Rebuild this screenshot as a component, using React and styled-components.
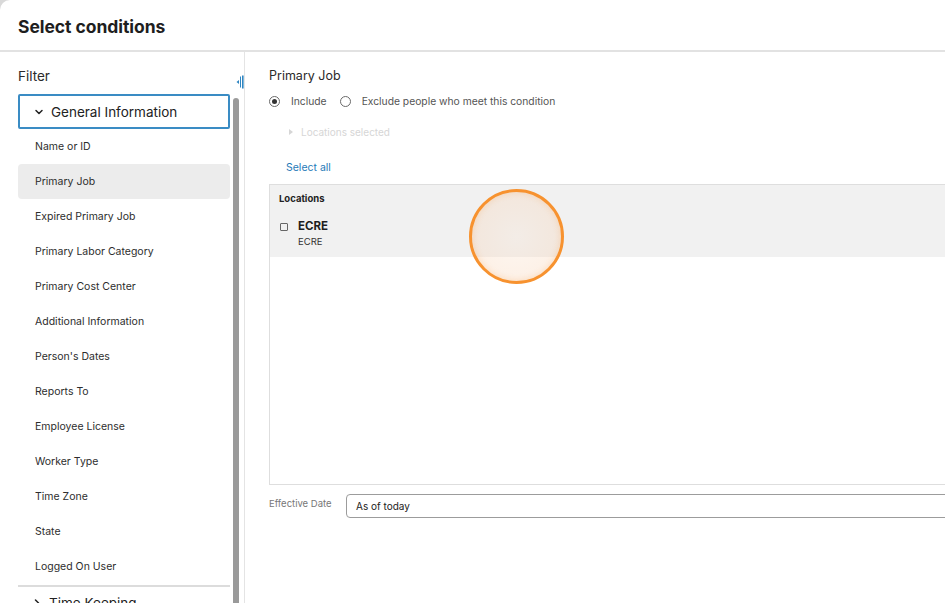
import React from "react";
import styled, { createGlobalStyle } from "styled-components";

const Global = createGlobalStyle`
  html, body { margin: 0; padding: 0; background: #d9d9d9; }
  body { font-family: Inter, "Open Sans", sans-serif; color: #222; }
  * { box-sizing: border-box; }
`;

const Dialog = styled.div`
  width: 945px;
  height: 603px;
  background: #fff;
  border-top-left-radius: 10px;
  display: flex;
  flex-direction: column;
  overflow: hidden;
  position: relative;
`;

const Header = styled.div`
  height: 52px;
  flex: none;
  display: flex;
  align-items: center;
  padding: 2px 0 0 18px;
  border-bottom: 2px solid #e2e2e2;
`;

const Title = styled.h1`
  margin: 0;
  font-size: 17.5px;
  font-weight: 700;
  letter-spacing: -0.05px;
  color: #1e1e1e;
`;

const Body = styled.div`
  flex: 1;
  display: flex;
  min-height: 0;
`;

const LeftPanel = styled.div`
  width: 245px;
  flex: none;
  display: flex;
  border-right: 1px solid #e4e4e4;
  padding-left: 18px;
`;

const LeftContent = styled.div`
  width: 213px;
  display: flex;
  flex-direction: column;
  padding-top: 14px;
`;

const FilterLabel = styled.div`
  font-size: 13.5px;
  line-height: 20px;
  color: #2a2a2a;
  margin-bottom: 8px;
  flex: none;
`;

const GroupBox = styled.div`
  height: 35px;
  flex: none;
  border: 2px solid #3a8cc4;
  border-radius: 2px;
  display: flex;
  align-items: center;
  gap: 7px;
  padding-left: 14px;
  font-size: 13.5px;
  color: #222;
`;

const Item = styled.div`
  height: 35px;
  flex: none;
  display: flex;
  align-items: center;
  padding-left: 17px;
  font-size: 10.5px;
  color: #2d2d2d;
  border-radius: 4px;
  background: ${(p) => (p.$active ? "#ececec" : "transparent")};
`;

const Separator = styled.div`
  height: 2px;
  flex: none;
  background: #dcdcdc;
  margin-top: 1px;
`;

const GroupHeader = styled.div`
  display: flex;
  flex: none;
  align-items: center;
  gap: 7px;
  padding: 8px 0 0 14px;
  font-size: 13.5px;
  color: #222;
`;

const ScrollColumn = styled.div`
  width: 14px;
  display: flex;
  flex-direction: column;
  align-items: flex-start;
  padding-top: 23px;
`;

const CollapseIcon = styled.svg`
  margin-left: 6px;
  flex: none;
`;

const ScrollThumb = styled.div`
  margin-left: 3px;
  margin-top: 9px;
  width: 6px;
  flex: 1;
  background: #9a9a9a;
  border-radius: 3px 3px 0 0;
`;

const RightPanel = styled.div`
  flex: 1;
  min-width: 0;
  padding: 15px 0 0 24px;
  display: flex;
  flex-direction: column;
`;

const SectionTitle = styled.div`
  font-size: 12.5px;
  line-height: 18px;
  color: #2a2a2a;
`;

const RadioRow = styled.div`
  display: flex;
  align-items: center;
  height: 16px;
  margin-top: 8px;
  font-size: 10.3px;
  color: #555;
`;

const Radio = styled.span`
  width: 11px;
  height: 11px;
  border-radius: 50%;
  border: 1px solid #6a6a6a;
  display: inline-flex;
  align-items: center;
  justify-content: center;
  margin: 0 11px 0 0;
  &::after {
    content: "";
    width: 5px;
    height: 5px;
    border-radius: 50%;
    background: ${(p) => (p.$checked ? "#333" : "transparent")};
  }
`;

const RadioText = styled.span`
  margin-right: 13px;
`;

const Collapsed = styled.div`
  display: flex;
  align-items: center;
  gap: 8px;
  margin: 15px 0 0 20px;
  height: 16px;
  font-size: 10px;
  color: #d6d6d6;
`;

const Caret = styled.span`
  width: 0;
  height: 0;
  border-top: 3px solid transparent;
  border-bottom: 3px solid transparent;
  border-left: 4px solid #d6d6d6;
`;

const SelectAll = styled.a`
  margin: 21px 0 0 17px;
  font-size: 10.5px;
  line-height: 14px;
  color: #1f7ab8;
  text-decoration: none;
`;

const Table = styled.div`
  margin-top: 9px;
  margin-right: -12px;
  height: 301px;
  border: 1px solid #dedede;
  display: flex;
  flex-direction: column;
`;

const TableHead = styled.div`
  background: #f1f1f1;
  height: 27px;
  display: flex;
  align-items: center;
  padding: 0 0 0 9px;
  font-size: 9.5px;
  font-weight: 700;
  color: #222;
`;

const TableRow = styled.div`
  background: #f1f1f1;
  height: 45px;
  display: flex;
  align-items: flex-start;
  padding: 6px 0 0 10px;
  gap: 10px;
`;

const Check = styled.span`
  width: 8px;
  height: 8px;
  border: 1px solid #666;
  border-radius: 1px;
  margin-top: 5px;
  flex: none;
`;

const Cell = styled.div`
  display: flex;
  flex-direction: column;
`;

const CellMain = styled.div`
  font-size: 11.5px;
  font-weight: 700;
  line-height: 16px;
  color: #1e1e1e;
`;

const CellSub = styled.div`
  font-size: 9.5px;
  line-height: 16px;
  color: #333;
`;

const DateRow = styled.div`
  display: flex;
  align-items: center;
  margin-top: 9px;
  margin-right: -12px;
`;

const DateLabel = styled.div`
  font-size: 9.5px;
  color: #777;
  width: 77px;
  margin-top: -6px;
`;

const DateInput = styled.div`
  flex: 1;
  height: 24px;
  border: 1px solid #9c9c9c;
  border-radius: 4px;
  display: flex;
  align-items: center;
  padding-left: 9px;
  font-size: 10px;
  color: #222;
`;

const ClickMarker = styled.div`
  position: absolute;
  left: 469px;
  top: 189px;
  width: 95px;
  height: 95px;
  border-radius: 50%;
  border: 3px solid #f7922f;
  background: radial-gradient(circle, rgba(248, 222, 200, 0.25) 0%, rgba(248, 205, 170, 0.35) 100%);
  box-shadow: inset 0 0 6px rgba(247, 146, 47, 0.25);
`;

const Chevron = ({ open = true }) => (
  <svg width="10" height="10" viewBox="0 0 10 10" style={{ transform: open ? "none" : "rotate(-90deg)" }}>
    <path d="M2 3.5 L5 6.5 L8 3.5" fill="none" stroke="#222" strokeWidth="1.5" strokeLinecap="round" strokeLinejoin="round" />
  </svg>
);

const items = [
  "Name or ID",
  "Primary Job",
  "Expired Primary Job",
  "Primary Labor Category",
  "Primary Cost Center",
  "Additional Information",
  "Person's Dates",
  "Reports To",
  "Employee License",
  "Worker Type",
  "Time Zone",
  "State",
  "Logged On User",
];

export default function App() {
  return (
    <>
      <Global />
      <Dialog>
        <Header>
          <Title>Select conditions</Title>
        </Header>
        <Body>
          <LeftPanel>
            <LeftContent>
              <FilterLabel>Filter</FilterLabel>
              <GroupBox>
                <Chevron />
                General Information
              </GroupBox>
              {items.map((t) => (
                <Item key={t} $active={t === "Primary Job"}>
                  {t}
                </Item>
              ))}
              <Separator />
              <GroupHeader>
                <Chevron open={false} />
                Time Keeping
              </GroupHeader>
            </LeftContent>
            <ScrollColumn>
              <CollapseIcon width="8" height="14" viewBox="0 0 8 14">
                <path d="M3 5 L0.5 7 L3 9 Z" fill="#2f86c2" />
                <rect x="4" y="1.5" width="1" height="11" fill="#2f86c2" />
                <rect x="6" y="0.5" width="1.6" height="13" fill="#2f86c2" />
              </CollapseIcon>
              <ScrollThumb />
            </ScrollColumn>
          </LeftPanel>
          <RightPanel>
            <SectionTitle>Primary Job</SectionTitle>
            <RadioRow>
              <Radio $checked />
              <RadioText>Include</RadioText>
              <Radio />
              <RadioText>Exclude people who meet this condition</RadioText>
            </RadioRow>
            <Collapsed>
              <Caret />
              Locations selected
            </Collapsed>
            <SelectAll>Select all</SelectAll>
            <Table>
              <TableHead>Locations</TableHead>
              <TableRow>
                <Check />
                <Cell>
                  <CellMain>ECRE</CellMain>
                  <CellSub>ECRE</CellSub>
                </Cell>
              </TableRow>
            </Table>
            <DateRow>
              <DateLabel>Effective Date</DateLabel>
              <DateInput>As of today</DateInput>
            </DateRow>
          </RightPanel>
        </Body>
        <ClickMarker />
      </Dialog>
    </>
  );
}
